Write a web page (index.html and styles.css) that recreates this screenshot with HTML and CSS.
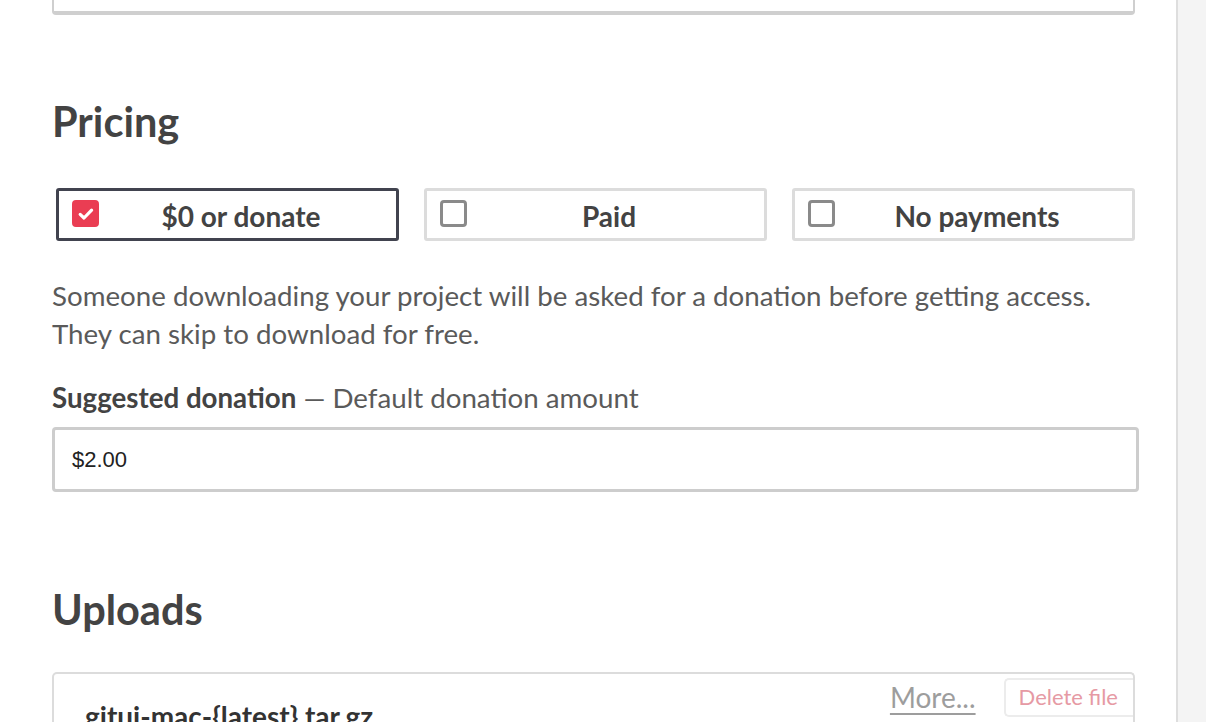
FILE: index.html
```html
<!DOCTYPE html>
<html lang="en">
<head>
<meta charset="utf-8">
<title>Edit project</title>
<link rel="stylesheet" href="styles.css">
</head>
<body>
<div class="layout">
  <main class="main">
    <div class="prev-box"></div>

    <section class="section pricing">
      <h2 class="section-title">Pricing</h2>
      <div class="options">
        <label class="option option-selected">
          <span class="check check-on">
            <svg viewBox="0 0 20 20" width="20" height="20"><path d="M4.2 10.4 L8 14 L15.6 6.2" fill="none" stroke="#fff" stroke-width="3.2" stroke-linecap="round" stroke-linejoin="round"/></svg>
          </span>
          <span class="option-text">$0 or donate</span>
        </label>
        <label class="option">
          <span class="check"></span>
          <span class="option-text">Paid</span>
        </label>
        <label class="option">
          <span class="check"></span>
          <span class="option-text">No payments</span>
        </label>
      </div>
      <p class="desc">Someone downloading your project will be asked for a donation before getting access.<br>They can skip to download for free.</p>
      <div class="field">
        <div class="field-label"><strong>Suggested donation</strong> — Default donation amount</div>
        <div class="input">$2.00</div>
      </div>
    </section>

    <section class="section uploads">
      <h2 class="section-title">Uploads</h2>
      <div class="file-card">
        <div class="file-name">gitui-mac-{latest}.tar.gz</div>
        <div class="file-actions">
          <a class="more-link">More...</a>
          <span class="delete-btn">Delete file</span>
        </div>
      </div>
    </section>
  </main>
  <aside class="side"></aside>
</div>
</body>
</html>
```

FILE: styles.css
```css
html, body {
  margin: 0;
  padding: 0;
  background: #fff;
  height: 100%;
  overflow: hidden;
}
body {
  font-family: Lato, "Noto Sans", sans-serif;
  color: #434343;
}
.layout {
  display: flex;
  height: 722px;
}
.main {
  flex: 1;
  padding: 0 41px 0 52px;
  overflow: hidden;
}
.side {
  width: 28px;
  background: #f4f4f4;
  border-left: 2px solid #dedede;
}
.prev-box {
  height: 11px;
  border: 2px solid #cfcfcf;
  border-top: none;
  border-bottom-width: 4px;
  border-radius: 0 0 4px 4px;
}
.section-title {
  margin: 0;
  font-size: 41.5px;
  line-height: 48px;
  font-weight: 700;
  color: #434343;
}
.pricing {
  padding-top: 82px;
}
.options {
  display: flex;
  gap: 25px;
  padding-left: 4px;
  margin-top: 43px;
}
.option {
  flex: 1;
  height: 53px;
  box-sizing: border-box;
  border: 3px solid #dcdcdc;
  border-radius: 3px;
  display: flex;
  align-items: center;
  padding: 0 13px;
}
.option-selected {
  border-color: #41434f;
}
.check {
  width: 27px;
  height: 27px;
  box-sizing: border-box;
  border: 3px solid #8a8a8a;
  border-radius: 4px;
  flex: none;
  display: flex;
  align-items: center;
  justify-content: center;
  margin-top: -2px;
}
.check-on {
  background: #ea3d53;
  border-color: #ea3d53;
}
.check-on svg {
  flex: none;
}
.option-text {
  flex: 1;
  text-align: center;
  font-size: 28px;
  font-weight: 700;
  color: #434343;
  padding-top: 2px;
}
.desc {
  margin: 36px 0 0;
  font-size: 27.7px;
  line-height: 38px;
  color: #5a5a5a;
}
.field {
  margin-top: 28px;
}
.field-label {
  font-size: 27.7px;
  line-height: 34px;
  color: #5a5a5a;
}
.field-label strong {
  color: #434343;
  font-weight: 700;
}
.input {
  margin-top: 12px;
  width: calc(100% + 4px);
  box-sizing: border-box;
  height: 65px;
  border: 3px solid #cdcdcd;
  border-radius: 4px;
  padding: 0 17px;
  display: flex;
  align-items: center;
  font-family: "Liberation Sans", Arial, sans-serif;
  font-size: 22px;
  color: #222;
}
.uploads {
  padding-top: 93px;
}
.file-card {
  margin-top: 39px;
  border: 2px solid #dcdcdc;
  border-bottom: none;
  border-radius: 5px 5px 0 0;
  height: 80px;
  display: grid;
  grid-template-columns: 1fr auto;
  align-items: start;
}
.file-name {
  padding: 25px 0 0 31px;
  font-size: 28px;
  line-height: 34px;
  font-weight: 700;
  color: #333;
}
.file-actions {
  display: flex;
  align-items: center;
  gap: 28px;
  margin-top: 4px;
}
.more-link {
  font-size: 28px;
  color: #9d9d9d;
  text-decoration: underline;
  text-underline-offset: 5px;
  padding-bottom: 2px;
}
.delete-btn {
  font-size: 22px;
  color: #e69aa4;
  border: 2px solid #ececec;
  border-right: none;
  border-radius: 5px 0 0 5px;
  padding: 4px 15px 5px 13px;
  line-height: 26px;
}
```
